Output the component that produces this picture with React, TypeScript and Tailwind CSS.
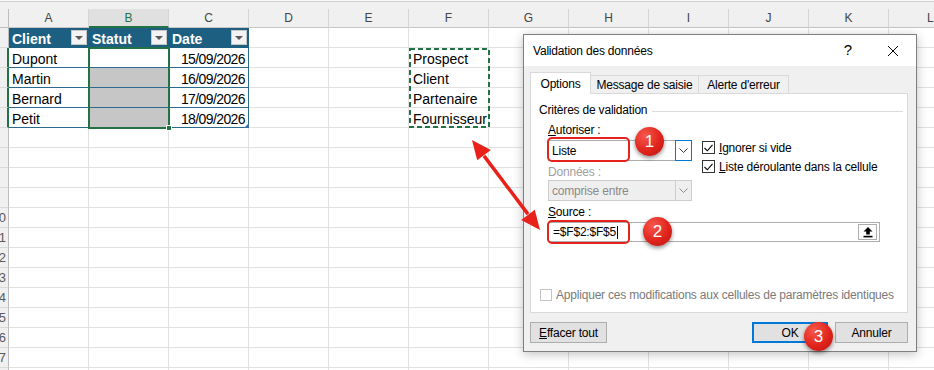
import React from "react";

// Excel sheet with the "Validation des données" dialog open over it.

const COLS = ["A", "B", "C", "D", "E", "F", "G", "H", "I", "J", "K"];
const names = ["Dupont", "Martin", "Bernard", "Petit"];
const dates = ["15/09/2026", "16/09/2026", "17/09/2026", "18/09/2026"];
const list = ["Prospect", "Client", "Partenaire", "Fournisseur"];

function Cell({ children, className }: { children?: React.ReactNode; className: string }) {
  return (
    <div
      className={`shrink-0 w-[80px] h-full border-r border-b flex items-center px-[3px] text-[14px] whitespace-nowrap overflow-hidden ${className}`}
    >
      {children}
    </div>
  );
}

// Excel bottom-aligns cell text, so it sits a little lower than centred.
function Txt({ children }: { children: React.ReactNode }) {
  return <span className="mt-[4px]">{children}</span>;
}

function FilterBtn() {
  return (
    <span className="shrink-0 w-[16px] h-[15px] bg-[#f3f3f3] border border-[#c8c8c8] flex items-center justify-center">
      <svg width="8" height="4" viewBox="0 0 8 4">
        <path d="M0 0H8L4 4Z" fill="#595959" />
      </svg>
    </span>
  );
}

function RowHead({ n, selected }: { n: number; selected: boolean }) {
  return (
    <div
      className={`shrink-0 w-[9px] h-full bg-[#f0f0f0] border-b border-b-[#d9d9d9] flex items-center justify-end overflow-hidden ${
        selected ? "border-r-2 border-r-[#217346]" : "border-r border-r-[#bdbdbd]"
      }`}
    >
      {n >= 10 && <span className="text-[13px] text-[#5a5a5a] pr-[2px] whitespace-nowrap">{n}</span>}
    </div>
  );
}

function SheetRow({ r }: { r: number }) {
  const d = r >= 2 && r <= 5 ? r - 2 : -1;
  const blank = "border-[#e1e1e1]";
  return (
    <div className="flex h-[20px] shrink-0">
      <RowHead n={r} selected={d >= 0} />
      {r === 1 ? (
        <>
          <Cell className="bg-[#1d5f80] border-[#1d5f80] text-white font-bold justify-between pr-[1px]">
            <Txt>Client</Txt>
            <FilterBtn />
          </Cell>
          <Cell className="bg-[#1d5f80] border-[#1d5f80] text-white font-bold justify-between pr-[1px]">
            <Txt>Statut</Txt>
            <FilterBtn />
          </Cell>
          <Cell className="bg-[#1d5f80] border-[#1d5f80] text-white font-bold justify-between pr-[1px]">
            <Txt>Date</Txt>
            <FilterBtn />
          </Cell>
        </>
      ) : d >= 0 ? (
        <>
          <Cell className="border-r-[#e1e1e1] border-b-[#2b6a8c]">
            <Txt>{names[d]}</Txt>
          </Cell>
          <Cell className={`border-r-[#e1e1e1] border-b-[#2b6a8c] ${d === 0 ? "bg-white" : "bg-[#c6c6c6]"}`} />
          <Cell className="border-[#2b6a8c] justify-end tracking-[-0.6px]">
            <Txt>{dates[d]}</Txt>
          </Cell>
        </>
      ) : (
        <>
          <Cell className={blank} />
          <Cell className={blank} />
          <Cell className={blank} />
        </>
      )}
      <Cell className={blank} />
      <Cell className={blank} />
      <Cell className={`${blank} pl-[4px]`}>{d >= 0 ? <Txt>{list[d]}</Txt> : null}</Cell>
      <Cell className={blank} />
      <Cell className={blank} />
      <Cell className={blank} />
      <Cell className={blank} />
      <Cell className={blank} />
      <div className="flex-1 h-full border-b border-[#e1e1e1]" />
    </div>
  );
}

function Chevron({ color }: { color: string }) {
  return (
    <svg width="9" height="5" viewBox="0 0 9 5">
      <path d="M0.5 0.5L4.5 4.5L8.5 0.5" stroke={color} strokeWidth="1" fill="none" />
    </svg>
  );
}

function Check({ checked, disabled }: { checked?: boolean; disabled?: boolean }) {
  return (
    <span
      className={`shrink-0 bg-white border flex items-center justify-center ${
        disabled ? "w-[12px] h-[12px] border-[#c4c4c4]" : "w-[13px] h-[13px] border-[#333333]"
      }`}
    >
      {checked && (
        <svg width="9" height="8" viewBox="0 0 9 8">
          <path d="M0.5 4L3.3 6.8L8.5 0.8" stroke="#000" strokeWidth="1.1" fill="none" />
        </svg>
      )}
    </span>
  );
}

function Badge({ n, className }: { n: number; className: string }) {
  return (
    <div
      className={`absolute w-[29px] h-[29px] rounded-full bg-[radial-gradient(circle_at_35%_30%,#f6584c_0%,#e0241c_55%,#b51510_100%)] shadow-[0_2px_4px_rgba(0,0,0,0.45)] text-white text-[17px] flex items-center justify-center ${className}`}
    >
      {n}
    </div>
  );
}

function Dialog() {
  return (
    <div className="absolute left-[523px] top-[34px] w-[394px] h-[318px] border border-[#7f7f7f] bg-[#f0f0f0] shadow-[0_2px_10px_rgba(0,0,0,0.25)] flex flex-col text-[12px] tracking-[-0.2px] text-black">
      {/* title bar */}
      <div className="h-[31px] shrink-0 bg-white flex items-center pl-[9px]">
        <span>Validation des données</span>
        <span className="ml-auto text-[15px] tracking-normal">?</span>
        <svg className="ml-[36px] mr-[18px]" width="10" height="10" viewBox="0 0 10 10">
          <path d="M0 0L10 10M10 0L0 10" stroke="#000" strokeWidth="1" />
        </svg>
      </div>

      <div className="flex flex-col pl-[6px] pr-[8px] pt-[6px]">
        {/* tabs */}
        <div className="relative z-10 flex items-end h-[22px] -mb-px">
          <div className="w-[61px] h-[22px] bg-white border border-b-0 border-[#d9d9d9] flex items-center justify-center">
            Options
          </div>
          <div className="w-[108px] h-[19px] bg-[#f0f0f0] border border-[#d9d9d9] border-l-0 flex items-center justify-center">
            Message de saisie
          </div>
          <div className="w-[90px] h-[19px] bg-[#f0f0f0] border border-[#d9d9d9] border-l-0 flex items-center justify-center">
            Alerte d'erreur
          </div>
        </div>

        {/* panel */}
        <div className="h-[220px] bg-white border border-[#d9d9d9] flex flex-col pl-[8px] pr-[4px] pt-[9px]">
          <div className="h-[14px] flex items-center">
            <span>Critères de validation</span>
            <div className="flex-1 h-px bg-[#dcdcdc] ml-[5px] mt-[2px]" />
          </div>

          <div className="flex flex-col pl-[9px]">
            <div className="flex mt-[6px]">
              <div className="flex flex-col w-[144px]">
                <div className="h-[14px] flex items-center">
                  <u>A</u>utoriser :
                </div>
                <div className="mt-[3px] h-[21px] flex">
                  <div className="flex-1 bg-white border border-r-0 border-[#adadad] flex items-center pl-[3px]">Liste</div>
                  <div className="w-[17px] bg-white border border-[#0078d7] flex items-center justify-center">
                    <Chevron color="#333" />
                  </div>
                </div>
                <div className="mt-[4px] h-[14px] flex items-center text-[#a0a0a0]">Données :</div>
                <div className="mt-[1px] h-[21px] flex bg-[#efefef] border border-[#cccccc]">
                  <div className="flex-1 flex items-center pl-[3px] text-[#8a8a8a]">comprise entre</div>
                  <div className="w-[16px] border-l border-[#cccccc] flex items-center justify-center">
                    <Chevron color="#8a8a8a" />
                  </div>
                </div>
              </div>
              <div className="flex flex-col ml-[10px] pt-[18px] gap-[6px]">
                <div className="flex items-center h-[13px]">
                  <Check checked />
                  <span className="ml-[4px]">
                    <u>I</u>gnorer si vide
                  </span>
                </div>
                <div className="flex items-center h-[13px]">
                  <Check checked />
                  <span className="ml-[4px]">
                    <u>L</u>iste déroulante dans la cellule
                  </span>
                </div>
              </div>
            </div>

            <div className="mt-[4px] h-[14px] flex items-center">
              <u>S</u>ource :
            </div>
            <div className="mt-[3px] w-[332px] h-[20px] bg-white border border-[#adadad] flex items-center pl-[4px]">
              <span>=$F$2:$F$5</span>
              <span className="w-px h-[13px] bg-black ml-[1px]" />
              <span className="ml-auto mr-[2px] w-[19px] h-[16px] bg-[#fdfdfd] border border-[#adadad] flex items-center justify-center">
                <svg width="10" height="11" viewBox="0 0 10 11">
                  <path d="M5 0L9.5 4.5H6.8V7.5H3.2V4.5H0.5Z" fill="#000" />
                  <rect x="0.5" y="8.8" width="9" height="1.6" fill="#000" />
                </svg>
              </span>
            </div>
          </div>

          <div className="mt-[46px] ml-[1px] h-[14px] flex items-center">
            <Check disabled />
            <span className="ml-[4px] text-[#7a7a7a]">Appliquer ces modifications aux cellules de paramètres identiques</span>
          </div>
        </div>

        {/* buttons */}
        <div className="flex items-center h-[21px] mt-[9px]">
          <div className="w-[77px] h-[21px] bg-[#e1e1e1] border border-[#adadad] flex items-center justify-center">
            <span>
              <u>E</u>ffacer tout
            </span>
          </div>
          <div className="ml-auto w-[76px] h-[21px] bg-[#e1e1e1] border-2 border-[#0078d7] flex items-center justify-center">OK</div>
          <div className="ml-[7px] w-[73px] h-[21px] bg-[#e1e1e1] border border-[#adadad] flex items-center justify-center">
            Annuler
          </div>
        </div>
      </div>
    </div>
  );
}

export default function App() {
  const rows = Array.from({ length: 18 }, (_, i) => i + 1);
  return (
    <div className="relative w-[934px] h-[370px] overflow-hidden bg-white font-['Liberation_Sans',Arial,sans-serif] text-black">
      {/* top strip */}
      <div className="h-[1px] bg-[#fafafa]" />
      <div className="h-[1px] bg-[#d0d0d0]" />
      <div className="h-[7px] bg-[#f0f0f0]" />

      {/* column headers */}
      <div className="flex h-[19px] bg-[#f0f0f0] text-[12px] text-[#444]">
        <div className="shrink-0 w-[9px] h-full border-r border-b border-[#bdbdbd]" />
        {COLS.map((c) =>
          c === "B" ? (
            <div
              key={c}
              className="shrink-0 w-[80px] h-full bg-[#e0e0e0] border-r border-r-[#d5d5d5] border-b-2 border-b-[#217346] text-[#217346] flex items-center justify-center"
            >
              {c}
            </div>
          ) : (
            <div
              key={c}
              className="shrink-0 w-[80px] h-full border-r border-r-[#d5d5d5] border-b border-b-[#c6c6c6] flex items-center justify-center"
            >
              {c}
            </div>
          )
        )}
        <div className="flex-1 h-full border-b border-[#c6c6c6] flex items-center pl-[38px]">L</div>
      </div>

      {rows.map((r) => (
        <SheetRow key={r} r={r} />
      ))}

      {/* selection B2:B5 */}
      <div className="absolute left-[88px] top-[47px] w-[82px] h-[82px] border-2 border-[#217346]" />
      <div className="absolute left-[166px] top-[125px] w-[6px] h-[6px] bg-[#217346] border border-white" />
      {/* table resize handle */}
      <svg className="absolute left-[244px] top-[123px]" width="5" height="5" viewBox="0 0 5 5">
        <path d="M5 0V5H0Z" fill="#3b6ea5" />
      </svg>
      {/* copy marquee F2:F5 */}
      <svg className="absolute left-[409px] top-[48px]" width="81" height="80" viewBox="0 0 81 80">
        <rect x="1" y="1" width="79" height="78" fill="none" stroke="#217346" strokeWidth="2" strokeDasharray="5 3" />
      </svg>

      <Dialog />

      {/* annotations */}
      <div className="absolute left-[547px] top-[137px] w-[83px] h-[25px] border-2 border-[#e3231c] rounded-[5px]" />
      <div className="absolute left-[547px] top-[220px] w-[83px] h-[24px] border-2 border-[#e3231c] rounded-[5px]" />
      <svg className="absolute left-0 top-0 pointer-events-none" width="934" height="370" viewBox="0 0 934 370">
        <line x1="484" y1="155.9" x2="528" y2="214.1" stroke="#e8221b" strokeWidth="3.5" />
        <path d="M472 140L477.2 160.2L490.8 149.9Z" fill="#e8221b" />
        <path d="M540 230L534.8 209.8L521.2 220.1Z" fill="#e8221b" />
      </svg>
      <Badge n={1} className="left-[635px] top-[127px]" />
      <Badge n={2} className="left-[643px] top-[217px]" />
      <Badge n={3} className="left-[804px] top-[322px]" />
    </div>
  );
}
